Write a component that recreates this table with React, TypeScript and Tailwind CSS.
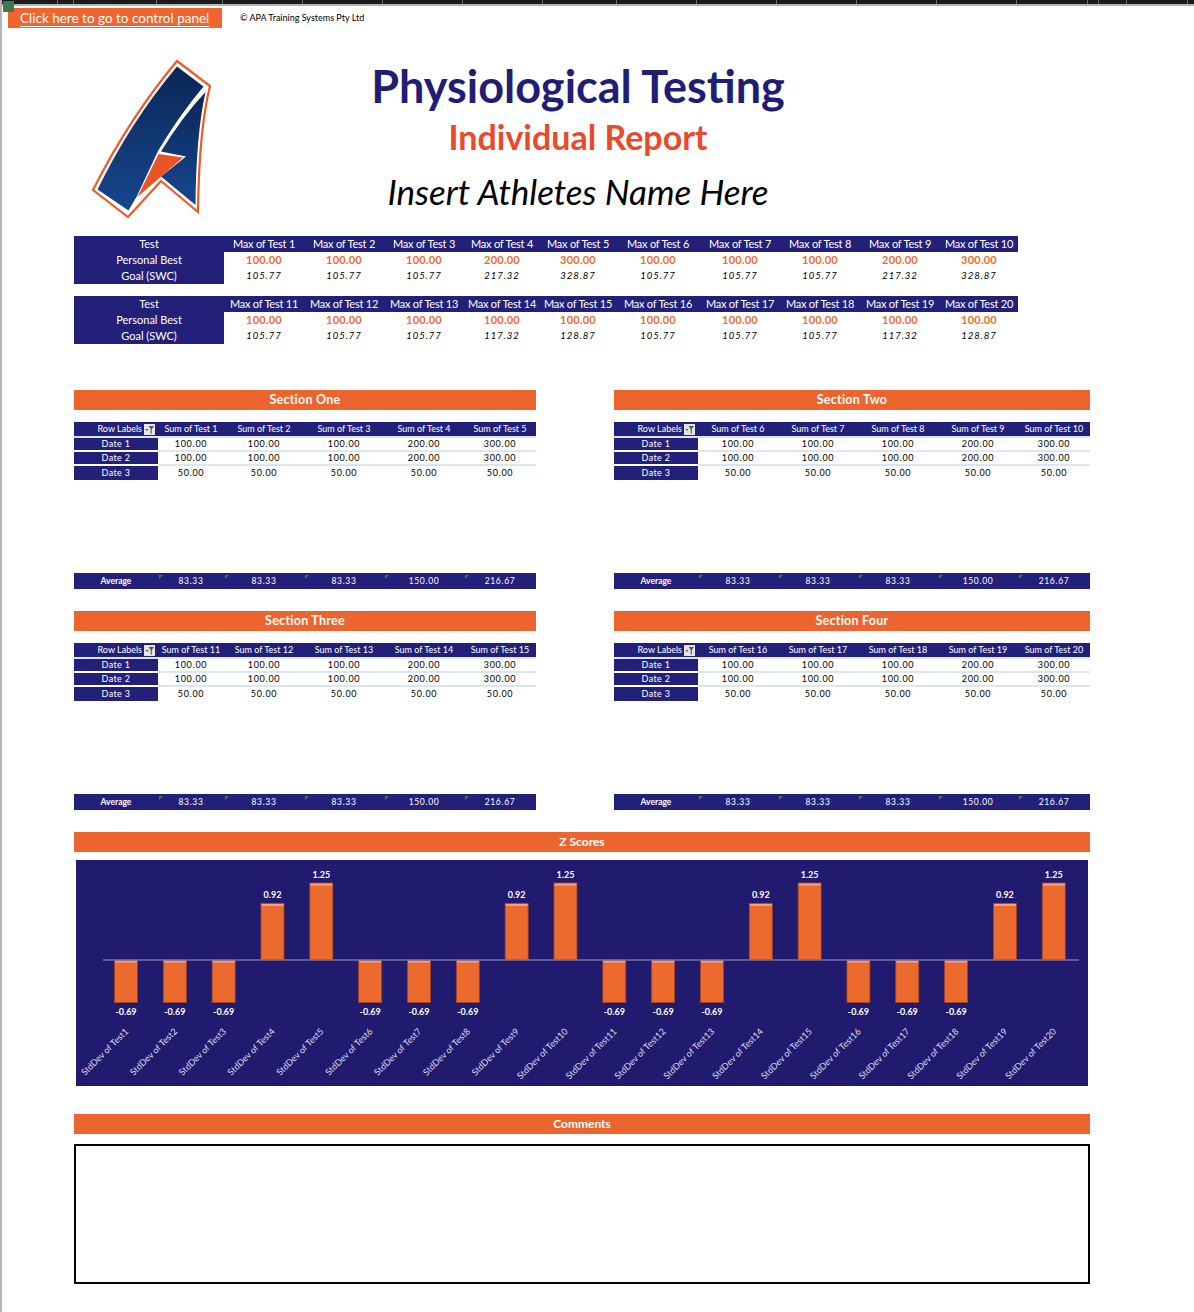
import React from "react";

const NAVY = "bg-[#23207a]";

function FilterIcon() {
  return (
    <svg width="11" height="11" viewBox="0 0 11 11" className="inline-block">
      <rect x="0" y="0" width="11" height="11" fill="#e4e4e8" />
      <path d="M1.5 5 L4.5 5 L3 7 Z" fill="#555" />
      <path d="M4.5 2 L10 2 L7.8 5 L7.8 9.5 L6.7 9.5 L6.7 5 Z" fill="#555" />
    </svg>
  );
}

function Logo() {
  return (
    <svg width="130" height="165" viewBox="88 50 130 165">
      <defs>
        <linearGradient id="lg" x1="0" y1="0" x2="0" y2="1">
          <stop offset="0" stopColor="#0b2655" />
          <stop offset="1" stopColor="#17478f" />
        </linearGradient>
      </defs>
      <path
        d="M177 56 L210 81 Q199 125 198 207 L161 176 L128 212 L93 185 Q130 112 177 56 Z"
        fill="#fff"
        stroke="#ef5a26"
        strokeWidth="2.2"
        strokeLinejoin="miter"
      />
      <path
        d="M177 61.5 L203.5 81.5 Q178 112 158 146 L137 191 L128.5 205.5 L97.5 184.5 Q131 116 177 61.5 Z"
        fill="url(#lg)"
      />
      <path
        d="M205.5 87 Q196 130 195.5 200 L161 171.5 L186 151.5 L161 146.5 Q182 112 205.5 87 Z"
        fill="url(#lg)"
      />
      <path d="M158.5 149 L183 152.5 L137.5 192 Z" fill="#ea5326" />
    </svg>
  );
}

function TopTable({
  nums,
  pb,
  goal,
}: {
  nums: number[];
  pb: string[];
  goal: string[];
}) {
  const cell = "h-4 text-center whitespace-nowrap";
  return (
    <div className="grid w-[944px] grid-cols-[150px_80px_80px_80px_76px_76px_84px_80px_80px_80px_78px] text-[11px] leading-4">
      <div className={`${cell} ${NAVY} text-white`}>Test</div>
      {nums.map((n) => (
        <div key={n} className={`${cell} ${NAVY} text-white tracking-[-0.02em]`}>
          Max of Test {n}
        </div>
      ))}
      <div className={`${cell} ${NAVY} text-white`}>Personal Best</div>
      {pb.map((v, i) => (
        <div key={i} className={`${cell} font-bold text-[#ef6a2e] tracking-[0.02em]`}>
          {v}
        </div>
      ))}
      <div className={`${cell} ${NAVY} text-white`}>Goal (SWC)</div>
      {goal.map((v, i) => (
        <div key={i} className={`${cell} italic text-[9.5px] tracking-[0.1em] text-black`}>
          {v}
        </div>
      ))}
    </div>
  );
}

function Pivot({
  title,
  nums,
  right,
}: {
  title: string;
  nums: number[];
  right?: boolean;
}) {
  const grid = right
    ? "grid-cols-[84px_80px_80px_80px_80px_72px] w-[476px]"
    : "grid-cols-[84px_66px_80px_80px_80px_72px] w-[462px]";
  const rows = [
    ["Date 1", "100.00", "100.00", "100.00", "200.00", "300.00"],
    ["Date 2", "100.00", "100.00", "100.00", "200.00", "300.00"],
    ["Date 3", "50.00", "50.00", "50.00", "50.00", "50.00"],
  ];
  const avg = ["83.33", "83.33", "83.33", "150.00", "216.67"];
  return (
    <div className="flex flex-col">
      <div className="flex h-5 items-center justify-center bg-[#ed652e] text-[12.5px] font-bold text-white tracking-[0.02em]">
        {title}
      </div>
      <div className={`mt-3 grid ${grid} text-[9px]`}>
        <div className={`flex h-4 items-center justify-end gap-[2px] border-b-2 border-[#dce6f1] ${NAVY} pr-[3px] text-white`}>
          <span>Row Labels</span>
          <FilterIcon />
        </div>
        {nums.map((n) => (
          <div
            key={n}
            className={`flex h-4 items-center justify-center whitespace-nowrap border-b-2 border-[#dce6f1] ${NAVY} text-white`}
          >
            Sum of Test {n}
          </div>
        ))}
        {rows.map((r, ri) => (
          <React.Fragment key={ri}>
            <div
              className={`flex items-center justify-center ${NAVY} text-white tracking-[0.04em] ${
                ri < 2 ? "h-[14px] border-b-2 border-white" : "h-[14px]"
              }`}
            >
              {r[0]}
            </div>
            {r.slice(1).map((v, i) => (
              <div
                key={i}
                className={`flex items-center justify-center text-black tracking-[0.08em] ${
                  ri < 2 ? "h-[14px] border-b-2 border-[#dce6f1]" : "h-[14px]"
                }`}
              >
                {v}
              </div>
            ))}
          </React.Fragment>
        ))}
      </div>
      <div className={`mt-[93px] grid ${grid} h-4 ${NAVY} text-[8.5px] text-white`}>
        <div className="flex items-center justify-center font-bold">Average</div>
        {avg.map((v, i) => (
          <div key={i} className="relative flex items-center justify-center tracking-[0.08em]">
            <span className="absolute left-[1px] top-[2px] h-0 w-0 border-r-[4px] border-t-[4px] border-r-transparent border-t-[#2f8a2f]" />
            {v}
          </div>
        ))}
      </div>
    </div>
  );
}

function Chart() {
  const vals = [
    -0.69, -0.69, -0.69, 0.92, 1.25, -0.69, -0.69, -0.69, 0.92, 1.25, -0.69, -0.69,
    -0.69, 0.92, 1.25, -0.69, -0.69, -0.69, 0.92, 1.25,
  ];
  const axis = 100;
  const scale = 61.6;
  const bw = 23;
  return (
    <svg width="1012" height="226" viewBox="0 0 1012 226" className="block">
      <rect x="0" y="0" width="1012" height="226" fill="#201b6e" />
      {vals.map((v, i) => {
        const cx = 50 + i * 48.83;
        const h = Math.abs(v) * scale;
        const y = v > 0 ? axis - h : axis;
        return (
          <g key={i}>
            <rect
              x={cx - bw / 2}
              y={y}
              width={bw}
              height={h}
              fill="#ec6a2e"
              stroke="#a8441c"
              strokeWidth="0.8"
            />
            <rect x={cx - bw / 2 + 0.6} y={y + 0.6} width={bw - 1.2} height="2" fill="#f6a27c" />
            <text
              x={cx}
              y={v > 0 ? y - 5 : y + h + 12}
              textAnchor="middle"
              fill="#ffffff"
              fontSize="9"
              fontWeight="700"
              fontFamily="Lato, 'Liberation Sans', sans-serif"
            >
              {v.toFixed(2)}
            </text>
            <text
              x={cx + 3}
              y={172}
              textAnchor="end"
              fill="#dedef0"
              fontSize="9"
              fontFamily="Lato, 'Liberation Sans', sans-serif"
              transform={`rotate(-45 ${cx + 3} 172)`}
            >
              {`StdDev of Test${i + 1}`}
            </text>
          </g>
        );
      })}
      <line x1="27" y1={axis} x2="1003" y2={axis} stroke="#7370a6" strokeWidth="1.5" />
    </svg>
  );
}

const STRIP = [
  "w-[56px]",
  "w-[16px]",
  "w-[83px]",
  "w-[66px]",
  "w-[80px]",
  "w-[80px]",
  "w-[80px]",
  "w-[80px]",
  "w-[74px]",
  "w-[80px]",
  "w-[80px]",
  "w-[80px]",
  "w-[80px]",
  "w-[80px]",
  "w-[71px]",
  "w-[11px]",
  "w-[28px]",
  "w-[61px]",
];

export default function App() {
  return (
    <div
      className="relative h-[1312px] w-[1194px] overflow-hidden border-l-2 border-[#b5b5b5] bg-white"
      style={{ fontFamily: "Lato, 'Open Sans', 'Liberation Sans', sans-serif" }}
    >
      <div className="flex h-[4px] bg-[#1b1b1b]">
        {STRIP.map((w, i) => (
          <div key={i} className={`h-full shrink-0 border-r border-[#6a6a6a] ${w}`} />
        ))}
      </div>
      <div className="h-[2px] bg-[#b3b3b3]" />
      <span className="absolute left-[1px] top-[1px] h-[11px] w-[11px] bg-[#3b7a4d]" />

      <div className="mt-[2px] flex items-center">
        <div className="ml-[6px] flex h-5 w-[214px] items-center bg-[#ee6530] pl-3">
          <span className="text-[13.5px] leading-5 text-white underline decoration-1 underline-offset-[3px]">
            Click here to go to control panel
          </span>
        </div>
        <span className="ml-[18px] text-[9px] text-black">© APA Training Systems Pty Ltd</span>
      </div>

      <div className="mt-[26px] flex">
        <div className="ml-[86px] mt-[1px]">
          <Logo />
        </div>
        <div className="flex w-[720px] flex-col items-center">
          <div className="mt-[7px] text-[45px] font-bold leading-[50px] text-[#1f1d74]">
            Physiological Testing
          </div>
          <div className="mt-[6px] text-[34px] font-bold leading-[40px] text-[#ea4a2b]">
            Individual Report
          </div>
          <div className="mt-[14px] text-[35px] italic leading-[40px] text-black">
            Insert Athletes Name Here
          </div>
        </div>
      </div>

      <div className="pl-[72px]">
        <div className="mt-[16px]">
          <TopTable
            nums={[1, 2, 3, 4, 5, 6, 7, 8, 9, 10]}
            pb={["100.00", "100.00", "100.00", "200.00", "300.00", "100.00", "100.00", "100.00", "200.00", "300.00"]}
            goal={["105.77", "105.77", "105.77", "217.32", "328.87", "105.77", "105.77", "105.77", "217.32", "328.87"]}
          />
        </div>
        <div className="mt-3">
          <TopTable
            nums={[11, 12, 13, 14, 15, 16, 17, 18, 19, 20]}
            pb={["100.00", "100.00", "100.00", "100.00", "100.00", "100.00", "100.00", "100.00", "100.00", "100.00"]}
            goal={["105.77", "105.77", "105.77", "117.32", "128.87", "105.77", "105.77", "105.77", "117.32", "128.87"]}
          />
        </div>

        <div className="mt-[46px] flex gap-[78px]">
          <Pivot title="Section One" nums={[1, 2, 3, 4, 5]} />
          <Pivot title="Section Two" nums={[6, 7, 8, 9, 10]} right />
        </div>
        <div className="mt-[22px] flex gap-[78px]">
          <Pivot title="Section Three" nums={[11, 12, 13, 14, 15]} />
          <Pivot title="Section Four" nums={[16, 17, 18, 19, 20]} right />
        </div>

        <div className="mt-[22px] w-[1016px]">
          <div className="flex h-5 items-center justify-center bg-[#ed652e] text-[12px] font-bold text-white">
            Z Scores
          </div>
          <div className="ml-[2px] mt-2">
            <Chart />
          </div>
          <div className="mt-[28px] flex h-5 items-center justify-center bg-[#ed652e] text-[12px] font-bold text-white">
            Comments
          </div>
          <div className="mt-[10px] h-[140px] border-2 border-black" />
        </div>
      </div>
    </div>
  );
}
